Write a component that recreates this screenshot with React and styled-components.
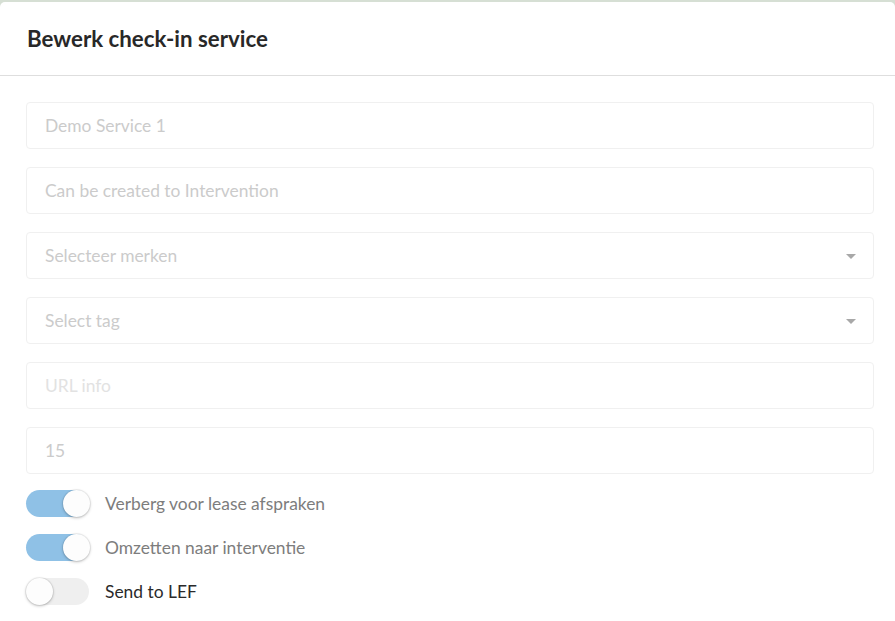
import React from "react";
import styled, { createGlobalStyle } from "styled-components";

const Global = createGlobalStyle`
  html, body { margin: 0; padding: 0; background: #d6dfd4; }
  body { font-family: Lato, "Open Sans", sans-serif; }
  * { box-sizing: border-box; }
`;

const Page = styled.div`
  padding-top: 2px;
  width: 895px;
  height: 621px;
  background: #d6dfd4;
`;

const Modal = styled.div`
  background: #fff;
  border-radius: 5px 5px 0 0;
  height: 619px;
  display: flex;
  flex-direction: column;
`;

const Header = styled.div`
  height: 74px;
  border-bottom: 1px solid #dedede;
  display: flex;
  align-items: center;
  padding: 0 27px;
`;

const Title = styled.h2`
  margin: 0;
  font-size: 22.3px;
  font-weight: 700;
  color: #282828;
`;

const Body = styled.div`
  padding: 26px 21px 0 26px;
  display: flex;
  flex-direction: column;
`;

const Fields = styled.div`
  display: flex;
  flex-direction: column;
  gap: 18px;
`;

const Field = styled.div`
  position: relative;
  height: 47px;
  border: 1px solid #f0f0f0;
  border-radius: 4px;
  display: flex;
  align-items: center;
  padding: 0 18px;
  font-size: 17.4px;
  color: ${(p) => (p.$faint ? "#e2e2e2" : "#cbcbcb")};
`;

const Caret = styled.span`
  position: absolute;
  right: 17px;
  top: 21px;
  width: 0;
  height: 0;
  border-left: 5px solid transparent;
  border-right: 5px solid transparent;
  border-top: 5px solid #a8a8a8;
`;

const Toggles = styled.div`
  display: flex;
  flex-direction: column;
  gap: 16px;
  margin-top: 15px;
`;

const ToggleRow = styled.div`
  display: flex;
  align-items: center;
  gap: 16px;
  height: 28px;
`;

const Track = styled.div`
  position: relative;
  width: 63px;
  height: 27px;
  border-radius: 14px;
  background: ${(p) => (p.$on ? "#8fc1e6" : "#efefef")};
  flex: none;
`;

const Knob = styled.div`
  position: absolute;
  top: 0;
  left: ${(p) => (p.$on ? "37px" : "0")};
  width: 27px;
  height: 27px;
  border-radius: 50%;
  background: #fdfdfd;
  box-shadow: 0 1px 3px rgba(0, 0, 0, 0.25), 0 0 0 1px rgba(0, 0, 0, 0.05);
`;

const Label = styled.span`
  font-size: 17.4px;
  color: ${(p) => (p.$dark ? "#2a2a2a" : "#7d7d7d")};
`;

const fields = [
  { text: "Demo Service 1" },
  { text: "Can be created to Intervention" },
  { text: "Selecteer merken", select: true },
  { text: "Select tag", select: true },
  { text: "URL info", faint: true },
  { text: "15" },
];

const toggles = [
  { label: "Verberg voor lease afspraken", on: true },
  { label: "Omzetten naar interventie", on: true },
  { label: "Send to LEF", on: false, dark: true },
];

export default function App() {
  return (
    <>
      <Global />
      <Page>
        <Modal>
          <Header>
            <Title>Bewerk check-in service</Title>
          </Header>
          <Body>
            <Fields>
              {fields.map((f) => (
                <Field key={f.text} $faint={f.faint}>
                  {f.text}
                  {f.select && <Caret />}
                </Field>
              ))}
            </Fields>
            <Toggles>
              {toggles.map((t) => (
                <ToggleRow key={t.label}>
                  <Track $on={t.on}>
                    <Knob $on={t.on} />
                  </Track>
                  <Label $dark={t.dark}>{t.label}</Label>
                </ToggleRow>
              ))}
            </Toggles>
          </Body>
        </Modal>
      </Page>
    </>
  );
}
